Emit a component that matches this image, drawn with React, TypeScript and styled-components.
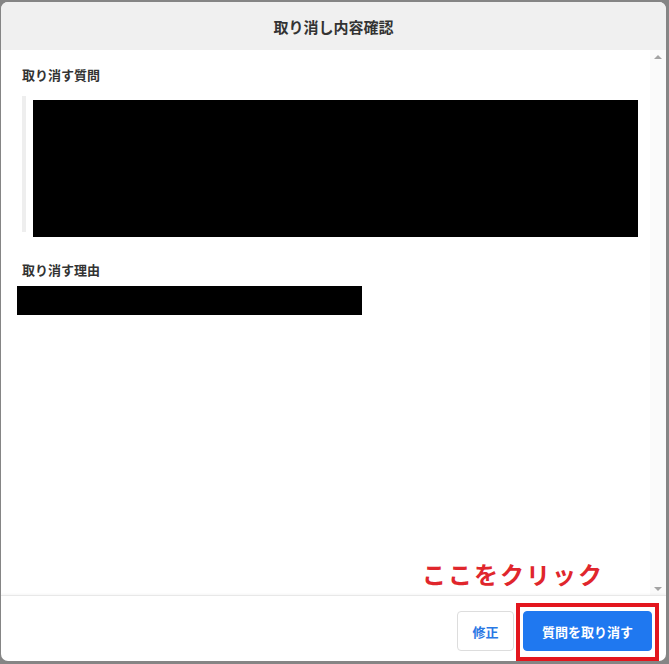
import styled, { createGlobalStyle } from "styled-components";

const GlobalStyle = createGlobalStyle`
  html, body {
    margin: 0;
    padding: 0;
    background: #858585;
  }
  body {
    font-family: "Noto Sans CJK JP", "Noto Sans", sans-serif;
    color: #333;
  }
`;

const Backdrop = styled.div`
  height: 664px;
  box-sizing: border-box;
  padding: 2px 3px 3px 1px;
  display: flex;
  background: #858585;
`;

const Modal = styled.div`
  position: relative;
  flex: 1;
  display: flex;
  flex-direction: column;
  background: #fff;
  border-radius: 7px;
  overflow: hidden;
`;

const Header = styled.div`
  height: 48px;
  flex-shrink: 0;
  display: flex;
  align-items: center;
  justify-content: center;
  background: #f0f0f0;
  font-size: 15px;
  font-weight: 700;
  color: #333;
`;

const Body = styled.div`
  flex: 1;
  display: flex;
  min-height: 0;
`;

const Content = styled.div`
  flex: 1;
  padding: 16px 12px 0 21px;
`;

const Label = styled.div<{ $top?: number }>`
  margin-top: ${(p) => p.$top ?? 0}px;
  font-size: 13px;
  font-weight: 700;
  line-height: 18px;
  color: #333;
`;

const Quote = styled.div`
  display: flow-root;
  margin-top: 12px;
  height: 136px;
  border-left: 4px solid #eeeeee;
  padding-left: 7px;
`;

const Redacted = styled.div<{ $w: string; $h: number; $shift?: number; $top?: number }>`
  width: ${(p) => p.$w};
  height: ${(p) => p.$h}px;
  background: #000;
  margin-left: ${(p) => p.$shift ?? 0}px;
  margin-top: ${(p) => p.$top ?? 0}px;
`;

const ScrollTrack = styled.div`
  width: 16px;
  flex-shrink: 0;
  background: #fafafa;
  display: flex;
  flex-direction: column;
  justify-content: space-between;
  align-items: center;
  padding: 5px 0 4px;
`;

const Arrow = styled.div<{ $down?: boolean }>`
  width: 0;
  height: 0;
  border-left: 4px solid transparent;
  border-right: 4px solid transparent;
  ${(p) =>
    p.$down
      ? "border-top: 4px solid #a3a3a3;"
      : "border-bottom: 4px solid #a3a3a3;"}
`;

const Footer = styled.div`
  height: 66px;
  flex-shrink: 0;
  box-sizing: border-box;
  border-top: 1px solid #e8e8e8;
  box-shadow: 0 -1px 2px rgba(0, 0, 0, 0.04);
  display: flex;
  justify-content: flex-end;
  align-items: flex-start;
  gap: 9px;
  padding: 15px 14px 0 0;
`;

const Button = styled.button<{ $primary?: boolean }>`
  height: 40px;
  box-sizing: border-box;
  border-radius: 4px;
  font-family: inherit;
  font-size: 13px;
  font-weight: 700;
  padding: 0 ${(p) => (p.$primary ? "15px" : "14px")};
  min-width: ${(p) => (p.$primary ? "129px" : "57px")};
  border: 1px solid ${(p) => (p.$primary ? "#1f78f0" : "#dddddd")};
  background: ${(p) => (p.$primary ? "#1f78f0" : "#ffffff")};
  color: ${(p) => (p.$primary ? "#ffffff" : "#2a78e4")};
`;

const Callout = styled.div`
  position: absolute;
  left: 421px;
  top: 552px;
  font-size: 24px;
  font-weight: 700;
  letter-spacing: 2px;
  color: #e0262c;
  line-height: 40px;
`;

const Highlight = styled.div`
  position: absolute;
  left: 515px;
  top: 601px;
  width: 143px;
  height: 58px;
  box-sizing: border-box;
  border: 4px solid #e3161e;
  pointer-events: none;
`;

export default function App() {
  return (
    <>
      <GlobalStyle />
      <Backdrop>
        <Modal>
          <Header>取り消し内容確認</Header>
          <Body>
            <Content>
              <Label>取り消す質問</Label>
              <Quote>
                <Redacted $w="605px" $h={137} $top={4} />
              </Quote>
              <Label $top={29}>取り消す理由</Label>
              <Redacted $w="345px" $h={29} $shift={-5} $top={7} />
            </Content>
            <ScrollTrack>
              <Arrow />
              <Arrow $down />
            </ScrollTrack>
          </Body>
          <Footer>
            <Button>修正</Button>
            <Button $primary>質問を取り消す</Button>
          </Footer>
          <Callout>ここをクリック</Callout>
          <Highlight />
        </Modal>
      </Backdrop>
    </>
  );
}
